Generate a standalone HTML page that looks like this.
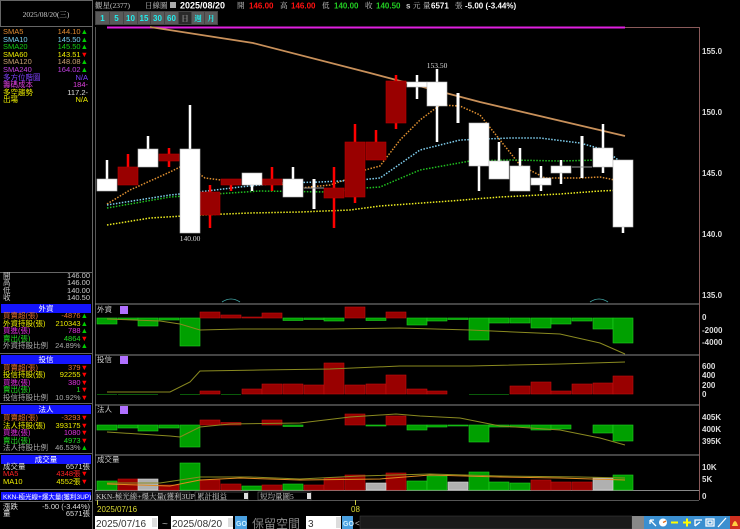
<!DOCTYPE html>
<html><head><meta charset="utf-8"><style>
body{margin:0;background:#000;width:740px;height:529px;overflow:hidden}
svg{display:block}
text{font-family:"Liberation Sans","Noto Sans CJK TC",sans-serif}
.s{font-family:"Liberation Serif","Noto Serif CJK SC",serif;font-size:7.5px}
.ax{font-size:8px;fill:#ddd;font-weight:bold}
</style></head><body>
<svg width="740" height="529" viewBox="0 0 740 529">
<rect width="740" height="529" fill="#000"/>
<rect x="0.5" y="0.5" width="92" height="26" fill="none" stroke="#666"/>
<text x="46" y="17" class="s" fill="#ccc" text-anchor="middle">2025/08/20(三)</text>
<line x1="92.5" y1="0" x2="92.5" y2="529" stroke="#666"/>
<line x1="0" y1="272.5" x2="92" y2="272.5" stroke="#666"/>
<g class="s">
<text x="3" y="34" fill="#e08a30">SMA5</text><text x="88" y="34" fill="#e08a30" text-anchor="end">144.10<tspan fill="#0c0">▲</tspan></text>
<text x="3" y="42" fill="#7ad0f0">SMA10</text><text x="88" y="42" fill="#7ad0f0" text-anchor="end">145.50<tspan fill="#0c0">▲</tspan></text>
<text x="3" y="49" fill="#1c1">SMA20</text><text x="88" y="49" fill="#1c1" text-anchor="end">145.50<tspan fill="#0c0">▲</tspan></text>
<text x="3" y="57" fill="#ee0">SMA60</text><text x="88" y="57" fill="#ee0" text-anchor="end">143.51<tspan fill="#f00">▼</tspan></text>
<text x="3" y="64" fill="#c8a070">SMA120</text><text x="88" y="64" fill="#c8a070" text-anchor="end">148.08<tspan fill="#0c0">▲</tspan></text>
<text x="3" y="72" fill="#c040e0">SMA240</text><text x="88" y="72" fill="#c040e0" text-anchor="end">164.02<tspan fill="#0c0">▲</tspan></text>
<text x="3" y="80" fill="#8040ff">多方位階圖</text><text x="88" y="80" fill="#8040ff" text-anchor="end">N/A</text>
<text x="3" y="87" fill="#e040e0">籌碼成本</text><text x="88" y="87" fill="#e040e0" text-anchor="end">184-</text>
<text x="3" y="95" fill="#ee0">多空趨勢</text><text x="88" y="95" fill="#ddd" text-anchor="end">117.2-</text>
<text x="3" y="102" fill="#ee0">出場</text><text x="88" y="102" fill="#ee0" text-anchor="end">N/A</text>
<text x="3" y="278" fill="#ccc">開</text><text x="90" y="278" fill="#ccc" text-anchor="end">146.00</text>
<text x="3" y="285" fill="#ccc">高</text><text x="90" y="285" fill="#ccc" text-anchor="end">146.00</text>
<text x="3" y="293" fill="#ccc">低</text><text x="90" y="293" fill="#ccc" text-anchor="end">140.00</text>
<text x="3" y="300" fill="#ccc">收</text><text x="90" y="300" fill="#ccc" text-anchor="end">140.50</text>
</g>
<g class="s">
<rect x="1" y="304" width="90" height="9" fill="#1515ff"/><text x="46" y="311" fill="#fff" text-anchor="middle">外資</text>
<text x="3" y="318" fill="#e07030">買賣超(張)</text><text x="88" y="318" fill="#e07030" text-anchor="end">-4876<tspan fill="#0c0">▲</tspan></text>
<text x="3" y="326" fill="#ee0">外資持股(張)</text><text x="88" y="326" fill="#ee0" text-anchor="end">210343<tspan fill="#0c0">▲</tspan></text>
<text x="3" y="333" fill="#e030e0">買進(張)</text><text x="88" y="333" fill="#e030e0" text-anchor="end">788<tspan fill="#0c0">▲</tspan></text>
<text x="3" y="341" fill="#2d2">賣出(張)</text><text x="88" y="341" fill="#2d2" text-anchor="end">4864<tspan fill="#f00">▼</tspan></text>
<text x="3" y="348" fill="#aaa">外資持股比例</text><text x="88" y="348" fill="#aaa" text-anchor="end">24.89%<tspan fill="#0c0">▲</tspan></text>
<line x1="0" y1="353.5" x2="92" y2="353.5" stroke="#666"/>
<rect x="1" y="355" width="90" height="9" fill="#1515ff"/><text x="46" y="362" fill="#fff" text-anchor="middle">投信</text>
<text x="3" y="370" fill="#e07030">買賣超(張)</text><text x="88" y="370" fill="#e07030" text-anchor="end">379<tspan fill="#f00">▼</tspan></text>
<text x="3" y="377" fill="#ee0">投信持股(張)</text><text x="88" y="377" fill="#ee0" text-anchor="end">92255<tspan fill="#f00">▼</tspan></text>
<text x="3" y="385" fill="#e030e0">買進(張)</text><text x="88" y="385" fill="#e030e0" text-anchor="end">380<tspan fill="#f00">▼</tspan></text>
<text x="3" y="392" fill="#2d2">賣出(張)</text><text x="88" y="392" fill="#2d2" text-anchor="end">1<tspan fill="#f00">▼</tspan></text>
<text x="3" y="400" fill="#aaa">投信持股比例</text><text x="88" y="400" fill="#aaa" text-anchor="end">10.92%<tspan fill="#f00">▼</tspan></text>
<line x1="0" y1="403.5" x2="92" y2="403.5" stroke="#666"/>
<rect x="1" y="405" width="90" height="9" fill="#1515ff"/><text x="46" y="412" fill="#fff" text-anchor="middle">法人</text>
<text x="3" y="420" fill="#e07030">買賣超(張)</text><text x="88" y="420" fill="#e07030" text-anchor="end">-3293<tspan fill="#f00">▼</tspan></text>
<text x="3" y="428" fill="#ee0">法人持股(張)</text><text x="88" y="428" fill="#ee0" text-anchor="end">393175<tspan fill="#f00">▼</tspan></text>
<text x="3" y="435" fill="#e030e0">買進(張)</text><text x="88" y="435" fill="#e030e0" text-anchor="end">1080<tspan fill="#f00">▼</tspan></text>
<text x="3" y="443" fill="#2d2">賣出(張)</text><text x="88" y="443" fill="#2d2" text-anchor="end">4973<tspan fill="#f00">▼</tspan></text>
<text x="3" y="450" fill="#aaa">法人持股比例</text><text x="88" y="450" fill="#aaa" text-anchor="end">46.53%<tspan fill="#0c0">▲</tspan></text>
<line x1="0" y1="453.5" x2="92" y2="453.5" stroke="#666"/>
<rect x="1" y="455" width="90" height="9" fill="#1515ff"/><text x="46" y="462" fill="#fff" text-anchor="middle">成交量</text>
<text x="3" y="469" fill="#ddd">成交量</text><text x="90" y="469" fill="#ddd" text-anchor="end">6571張</text>
<text x="3" y="476" fill="#f22">MA5</text><text x="88" y="476" fill="#f22" text-anchor="end">4348張<tspan fill="#f00">▼</tspan></text>
<text x="3" y="484" fill="#ee0">MA10</text><text x="88" y="484" fill="#ee0" text-anchor="end">4552張<tspan fill="#f00">▼</tspan></text>
<line x1="0" y1="489.5" x2="92" y2="489.5" stroke="#666"/>
<rect x="1" y="492" width="90" height="8" fill="#1515ff"/><text x="3" y="499" fill="#fff" font-size="6.5px">KKN-極光線+爆大量(獲利3UP)</text>
<line x1="0" y1="501.5" x2="92" y2="501.5" stroke="#666"/>
<text x="3" y="509" fill="#ddd">漲跌</text><text x="90" y="509" fill="#ddd" text-anchor="end">-5.00 (-3.44%)</text>
<text x="3" y="516" fill="#ddd">量</text><text x="90" y="516" fill="#ddd" text-anchor="end">6571張</text>
</g>
<g font-size="8px">
<text x="95" y="8" class="s" fill="#ccc">觀星(2377)</text>
<text x="145" y="8" class="s" fill="#ccc">日線圖</text>
<rect x="170" y="2" width="6" height="6" fill="#aaa"/>
<text x="180" y="8.5" fill="#fff" font-weight="bold" font-size="9px">2025/08/20</text>
<text x="237" y="8" class="s" fill="#ccc">開</text><text x="249" y="8.5" fill="#f11" font-weight="bold">146.00</text>
<text x="280" y="8" class="s" fill="#ccc">高</text><text x="291" y="8.5" fill="#f11" font-weight="bold">146.00</text>
<text x="322" y="8" class="s" fill="#ccc">低</text><text x="334" y="8.5" fill="#2c2" font-weight="bold">140.00</text>
<text x="365" y="8" class="s" fill="#ccc">收</text><text x="376" y="8.5" fill="#2c2" font-weight="bold">140.50</text>
<text x="406" y="8.5" fill="#ccc" font-weight="bold">s</text><text x="413" y="8" class="s" fill="#ccc">元</text>
<text x="423" y="8" class="s" fill="#ccc">量</text><text x="431" y="8.5" fill="#fff" font-weight="bold">6571</text><text x="455" y="8" class="s" fill="#ccc">張</text>
<text x="465" y="8.5" fill="#fff" font-weight="bold">-5.00 (-3.44%)</text>
</g>
<g font-size="8px" font-weight="bold" text-anchor="middle">
<rect x="95" y="11" width="123" height="14" fill="#444"/>
<rect x="96" y="12" width="13" height="12" fill="#5a5a5a"/><text x="102.5" y="21" fill="#2ee">1</text>
<rect x="110" y="12" width="13" height="12" fill="#5a5a5a"/><text x="116.5" y="21" fill="#2ee">5</text>
<rect x="124" y="12" width="13" height="12" fill="#5a5a5a"/><text x="130.5" y="21" fill="#2ee">10</text>
<rect x="138" y="12" width="12" height="12" fill="#5a5a5a"/><text x="144" y="21" fill="#2ee">15</text>
<rect x="151" y="12" width="13" height="12" fill="#5a5a5a"/><text x="157.5" y="21" fill="#2ee">30</text>
<rect x="165" y="12" width="13" height="12" fill="#5a5a5a"/><text x="171.5" y="21" fill="#2ee">60</text>
<rect x="179" y="12" width="12" height="12" fill="#2a2a2a"/><text x="185" y="21" class="s" fill="#888">日</text>
<rect x="192" y="12" width="12" height="12" fill="#5a5a5a"/><text x="198" y="21" class="s" fill="#2ee">週</text>
<rect x="205" y="12" width="12" height="12" fill="#5a5a5a"/><text x="211" y="21" class="s" fill="#2ee">月</text>
</g>
<line x1="95.5" y1="27" x2="95.5" y2="500" stroke="#555"/>
<line x1="625" y1="27.5" x2="699" y2="27.5" stroke="#8a5a5a"/>
<line x1="699.5" y1="27" x2="699.5" y2="500" stroke="#8a5a5a"/>
<line x1="107" y1="27.5" x2="625" y2="27.5" stroke="#e020e0" stroke-width="2"/>
<line x1="95" y1="304" x2="699" y2="304" stroke="#888"/>
<line x1="95" y1="355" x2="699" y2="355" stroke="#888"/>
<line x1="95" y1="405" x2="699" y2="405" stroke="#888"/>
<line x1="95" y1="455" x2="699" y2="455" stroke="#888"/>
<line x1="95" y1="490.5" x2="699" y2="490.5" stroke="#888"/>
<line x1="95" y1="500.5" x2="699" y2="500.5" stroke="#555"/>
<path d="M222 302 Q231 296 240 302 M590 302 Q599 296 608 302" stroke="#4aa" fill="none" stroke-width="0.8"/>
<g class="ax">
<text x="702" y="54">155.0</text><text x="702" y="115">150.0</text><text x="702" y="176">145.0</text><text x="702" y="237">140.0</text><text x="702" y="298">135.0</text>
<text x="702" y="320">0</text><text x="702" y="333">-2000</text><text x="702" y="345">-4000</text>
<text x="702" y="369">600</text><text x="702" y="378">400</text><text x="702" y="388">200</text><text x="702" y="397">0</text>
<text x="702" y="420">405K</text><text x="702" y="432">400K</text><text x="702" y="444">395K</text>
<text x="702" y="470">10K</text><text x="702" y="482">5K</text><text x="702" y="499">0</text>
</g>
<polyline points="150,27 253,43 370,73 480,102 625,136" fill="none" stroke="#c8905a" stroke-width="1.8"/>
<g fill="none" stroke-width="1.5" stroke-dasharray="1.5 1.5">
<polyline stroke="#e09030" points="107,204 130,190 170,172 186,164 205,178 245,183 280,184 300,188 330,185 345,180 365,170 380,166 400,140 420,120 440,105 460,106 480,115 500,140 520,165 545,178 580,178 600,177 615,180 625,183"/>
<polyline stroke="#80d0f0" points="107,205 170,195 190,193 240,187 280,183 320,182 360,180 380,178 420,150 460,140 510,138 540,138 580,143 605,150 625,165"/>
<polyline stroke="#20c020" points="107,208 170,197 200,195 260,191 330,192 365,188 380,187 420,170 470,161 510,160 560,161 600,160 625,161"/>
<polyline stroke="#eeee20" points="107,225 150,218 200,215 250,213 300,212 350,210 380,206 450,201 500,197 560,194 600,191 625,190"/>
</g>
<g stroke="#f00" stroke-width="2.5">
<line x1="128" y1="154" x2="128" y2="185"/><line x1="169" y1="148" x2="169" y2="167"/><line x1="210" y1="185" x2="210" y2="228"/><line x1="231" y1="179" x2="231" y2="191"/><line x1="272" y1="167" x2="272" y2="191"/><line x1="334" y1="167" x2="334" y2="228"/><line x1="355" y1="124" x2="355" y2="203"/><line x1="376" y1="130" x2="376" y2="160"/><line x1="396" y1="75" x2="396" y2="129"/>
</g>
<g fill="#990000" stroke="#b00" stroke-width="0.6">
<rect x="118" y="167" width="20" height="18"/><rect x="159" y="154" width="20" height="7"/><rect x="200" y="192" width="20" height="23"/><rect x="221" y="179" width="20" height="6"/><rect x="262" y="179" width="20" height="6"/><rect x="324" y="188" width="20" height="10"/><rect x="345" y="142" width="20" height="55"/><rect x="366" y="142" width="20" height="18"/><rect x="386" y="81" width="20" height="42"/>
</g>
<g stroke="#fff" stroke-width="2.5">
<line x1="107" y1="160" x2="107" y2="191"/><line x1="148" y1="136" x2="148" y2="149"/><line x1="190" y1="105" x2="190" y2="233"/><line x1="252" y1="173" x2="252" y2="191"/><line x1="293" y1="167" x2="293" y2="197"/><line x1="314" y1="179" x2="314" y2="209" stroke-width="3"/><line x1="417" y1="75" x2="417" y2="99"/><line x1="437" y1="69" x2="437" y2="142"/><line x1="458" y1="93" x2="458" y2="123" stroke-width="3"/><line x1="479" y1="123" x2="479" y2="191"/><line x1="499" y1="142" x2="499" y2="179"/><line x1="520" y1="148" x2="520" y2="191"/><line x1="541" y1="166" x2="541" y2="191"/><line x1="561" y1="160" x2="561" y2="184"/><line x1="582" y1="136" x2="582" y2="178" stroke-width="3"/><line x1="603" y1="124" x2="603" y2="173"/><line x1="623" y1="160" x2="623" y2="233"/>
</g>
<line x1="304" y1="188" x2="324" y2="188" stroke="#999"/><line x1="572" y1="167" x2="592" y2="167" stroke="#999"/>
<g fill="#fff" stroke="#bbb" stroke-width="0.6">
<rect x="97" y="179" width="20" height="12"/><rect x="138" y="149" width="20" height="18"/><rect x="180" y="149" width="20" height="84"/><rect x="242" y="173" width="20" height="12"/><rect x="283" y="179" width="20" height="18"/><rect x="407" y="82" width="20" height="5"/><rect x="427" y="82" width="20" height="24"/><rect x="469" y="123" width="20" height="43"/><rect x="489" y="161" width="20" height="18"/><rect x="510" y="166" width="20" height="25"/><rect x="531" y="178" width="20" height="7"/><rect x="551" y="166" width="20" height="7"/><rect x="593" y="148" width="20" height="19"/><rect x="613" y="160" width="20" height="67"/>
</g>
<text x="437" y="68" class="s" fill="#ddd" text-anchor="middle" font-size="8.5px">153.50</text>
<text x="190" y="241" class="s" fill="#ddd" text-anchor="middle" font-size="8.5px">140.00</text>
<g class="s">
<text x="97" y="312" fill="#ccc">外資</text><rect x="120" y="306" width="8" height="8" fill="#b070ff"/>
<text x="97" y="362" fill="#ccc">投信</text><rect x="120" y="356" width="8" height="8" fill="#b070ff"/>
<text x="97" y="412" fill="#ccc">法人</text><rect x="120" y="406" width="8" height="8" fill="#b070ff"/>
<text x="97" y="462" fill="#ccc">成交量</text>
</g>
<g fill="#00a000" stroke="#20d020" stroke-width="0.6">
<rect x="97" y="318" width="20" height="6"/><rect x="118" y="318" width="20" height="1.5"/><rect x="138" y="318" width="20" height="8"/><rect x="159" y="318" width="20" height="2"/><rect x="180" y="318" width="20" height="28"/><rect x="283" y="318" width="20" height="2.5"/><rect x="304" y="318" width="20" height="1.5"/><rect x="324" y="318" width="20" height="3"/><rect x="366" y="318" width="20" height="2.5"/><rect x="407" y="318" width="20" height="7"/><rect x="427" y="318" width="20" height="3"/><rect x="448" y="318" width="20" height="1.5"/><rect x="469" y="318" width="20" height="22"/><rect x="489" y="318" width="20" height="5"/><rect x="510" y="318" width="20" height="5"/><rect x="531" y="318" width="20" height="10"/><rect x="551" y="318" width="20" height="6"/><rect x="572" y="318" width="20" height="3"/><rect x="593" y="318" width="20" height="11"/><rect x="613" y="318" width="20" height="25"/>
<rect x="97" y="425" width="20" height="5"/><rect x="118" y="425" width="20" height="3"/><rect x="138" y="425" width="20" height="6"/><rect x="159" y="425" width="20" height="3"/><rect x="180" y="425" width="20" height="22"/><rect x="283" y="425" width="20" height="1.5"/><rect x="366" y="425" width="20" height="1"/><rect x="407" y="425" width="20" height="5"/><rect x="427" y="425" width="20" height="2"/><rect x="448" y="425" width="20" height="1"/><rect x="469" y="425" width="20" height="17"/><rect x="489" y="425" width="20" height="2"/><rect x="510" y="425" width="20" height="2"/><rect x="531" y="425" width="20" height="5"/><rect x="551" y="425" width="20" height="4"/><rect x="593" y="425" width="20" height="8"/><rect x="613" y="425" width="20" height="16"/>
<rect x="97" y="481" width="20" height="9"/><rect x="180" y="463" width="20" height="27"/><rect x="242" y="486" width="20" height="4"/><rect x="283" y="484" width="20" height="6"/><rect x="407" y="481" width="20" height="9"/><rect x="427" y="476" width="20" height="14"/><rect x="469" y="472" width="20" height="18"/><rect x="489" y="482" width="20" height="8"/><rect x="510" y="483" width="20" height="7"/><rect x="613" y="475" width="20" height="15"/>
</g>
<g fill="#0a5a0a">
<rect x="97" y="394" width="20" height="1"/><rect x="118" y="394" width="20" height="1"/><rect x="138" y="394" width="20" height="1"/><rect x="180" y="394" width="20" height="1"/><rect x="221" y="394" width="20" height="1"/><rect x="469" y="394" width="20" height="1"/><rect x="489" y="394" width="20" height="1"/>
</g>
<g fill="#990000" stroke="#c01010" stroke-width="0.6">
<rect x="200" y="312" width="20" height="6"/><rect x="221" y="315" width="20" height="3"/><rect x="242" y="317" width="20" height="1"/><rect x="262" y="313" width="20" height="5"/><rect x="345" y="307" width="20" height="11"/><rect x="386" y="312" width="20" height="6"/>
<rect x="200" y="391" width="20" height="3"/><rect x="242" y="389" width="20" height="5"/><rect x="262" y="384" width="20" height="10"/><rect x="283" y="384" width="20" height="10"/><rect x="304" y="385" width="20" height="9"/><rect x="324" y="363" width="20" height="31"/><rect x="345" y="385" width="20" height="9"/><rect x="366" y="384" width="20" height="10"/><rect x="386" y="375" width="20" height="19"/><rect x="407" y="389" width="20" height="5"/><rect x="427" y="391" width="20" height="3"/><rect x="510" y="386" width="20" height="8"/><rect x="531" y="382" width="20" height="12"/><rect x="551" y="391" width="20" height="3"/><rect x="572" y="384" width="20" height="10"/><rect x="593" y="383" width="20" height="11"/><rect x="613" y="376" width="20" height="18"/>
<rect x="200" y="420" width="20" height="5"/><rect x="221" y="422.5" width="20" height="2.5"/><rect x="262" y="420" width="20" height="5"/><rect x="345" y="414" width="20" height="11"/><rect x="386" y="416" width="20" height="9"/>
<rect x="118" y="479" width="20" height="11"/><rect x="159" y="485" width="20" height="5"/><rect x="200" y="480" width="20" height="10"/><rect x="221" y="484" width="20" height="6"/><rect x="262" y="485" width="20" height="5"/><rect x="304" y="485" width="20" height="5"/><rect x="324" y="478" width="20" height="12"/><rect x="345" y="475" width="20" height="15"/><rect x="386" y="473" width="20" height="17"/><rect x="531" y="480" width="20" height="10"/><rect x="551" y="482" width="20" height="8"/><rect x="572" y="482" width="20" height="8"/>
</g>
<g fill="#b0b0b0" stroke="#ddd" stroke-width="0.6">
<rect x="138" y="479" width="20" height="11"/><rect x="366" y="483" width="20" height="7"/><rect x="448" y="482" width="20" height="8"/><rect x="593" y="478" width="20" height="12"/>
</g>
<g fill="none" stroke-width="1">
<polyline stroke="#8a8a20" points="107,319 160,321 180,324 200,330 240,329 330,329 400,328 470,330 560,334 600,343 625,354"/>
<polyline stroke="#8a8a20" points="107,392 170,392 190,382 200,371 260,370 330,369 400,366 470,366 560,364 625,362"/>
<polyline stroke="#8a8a20" points="107,432 170,436 180,437 200,427 230,424 300,423 350,417 396,414 420,416 460,418 500,426 560,430 600,438 625,445"/>
<polyline stroke="#e08a20" points="107,484 170,486 200,480 240,478 300,480 380,479 430,475 500,477 560,478 625,480"/>
<polyline stroke="#8a8a20" points="107,483 160,483 200,477 250,477 300,479 360,476 430,474 500,476 580,477 625,478"/>
</g>
<rect x="95" y="492" width="95" height="8" fill="#111" stroke="#555" stroke-width="0.5"/>
<text x="96" y="499" class="s" fill="#ccc" font-size="6.5px">KKN-極光線+爆大量(獲利3UP)</text>
<rect x="195" y="492" width="53" height="8" fill="#000" stroke="#777" stroke-width="0.5"/><text x="197" y="499" class="s" fill="#ccc" font-size="6.5px">累計損益</text><rect x="244" y="493" width="4" height="6" fill="#ddd"/>
<rect x="258" y="492" width="53" height="8" fill="#000" stroke="#777" stroke-width="0.5"/><text x="260" y="499" class="s" fill="#ccc" font-size="6.5px">短均量圖5</text><rect x="307" y="493" width="4" height="6" fill="#ddd"/>
<line x1="97.5" y1="500" x2="97.5" y2="505" stroke="#cc4"/>
<text x="97" y="512" fill="#dd3" font-size="8px">2025/07/16</text>
<line x1="355.5" y1="500" x2="355.5" y2="505" stroke="#cc4"/>
<text x="351" y="512" fill="#dd3" font-size="8px">08</text>
<rect x="95" y="516" width="63" height="13" fill="#fff"/><text x="96" y="527" fill="#333" font-size="10px">2025/07/16</text><rect x="152" y="518" width="5" height="9" fill="#ddd"/>
<text x="162" y="527" fill="#aaa" font-size="10px">~</text>
<rect x="171" y="516" width="62" height="13" fill="#fff"/><text x="172" y="527" fill="#333" font-size="10px">2025/08/20</text><rect x="228" y="518" width="5" height="9" fill="#ddd"/>
<rect x="235" y="516" width="12" height="13" fill="#4aa0e0"/><text x="236" y="526" fill="#cef" font-size="7px" font-weight="bold">GO</text>
<text x="252" y="528" font-family="'Noto Sans CJK SC',sans-serif" fill="#888" font-size="12px">保留空間</text>
<rect x="306" y="516" width="35" height="13" fill="#fff"/><text x="308" y="527" fill="#333" font-size="10px">3</text><rect x="336" y="517" width="5" height="11" fill="#ddd"/>
<rect x="342" y="516" width="11" height="13" fill="#4aa0e0"/><text x="343" y="526" fill="#cef" font-size="7px" font-weight="bold">GO</text>
<text x="355" y="526" fill="#ccc" font-size="8px">&lt;</text>
<rect x="360" y="516" width="272" height="13" fill="#1a1a1a" stroke="#444" stroke-width="0.5"/>
<rect x="632" y="516" width="12" height="13" fill="#888"/>
<rect x="644" y="516" width="86" height="13" fill="#3b8fd0"/>
<g stroke="#fff" stroke-width="1.3" fill="none">
<path d="M650 520 L656 526 M650 520 L650 524 M650 520 L654 520"/>
<circle cx="663" cy="522.5" r="4" fill="#fff" stroke="none"/><path d="M663 522.5 L666 521" stroke="#e07020"/>
<path d="M671 522.5 H678" stroke="#ff0" stroke-width="2"/>
<path d="M683 522.5 H691 M687 518.5 V526.5" stroke="#ff0" stroke-width="2"/>
<path d="M695 526 V520 H702 M695 526 L700 522"/>
<path d="M706 519 h8 v7 h-8 z M708 521 h4 v3 h-4z"/>
<path d="M718 527 L726 518"/>
</g>
<rect x="730" y="516" width="10" height="13" fill="#d03020"/>
<path d="M732 526 Q735 516 738 526 Z" fill="#ffd040"/>
</svg>
</body></html>
